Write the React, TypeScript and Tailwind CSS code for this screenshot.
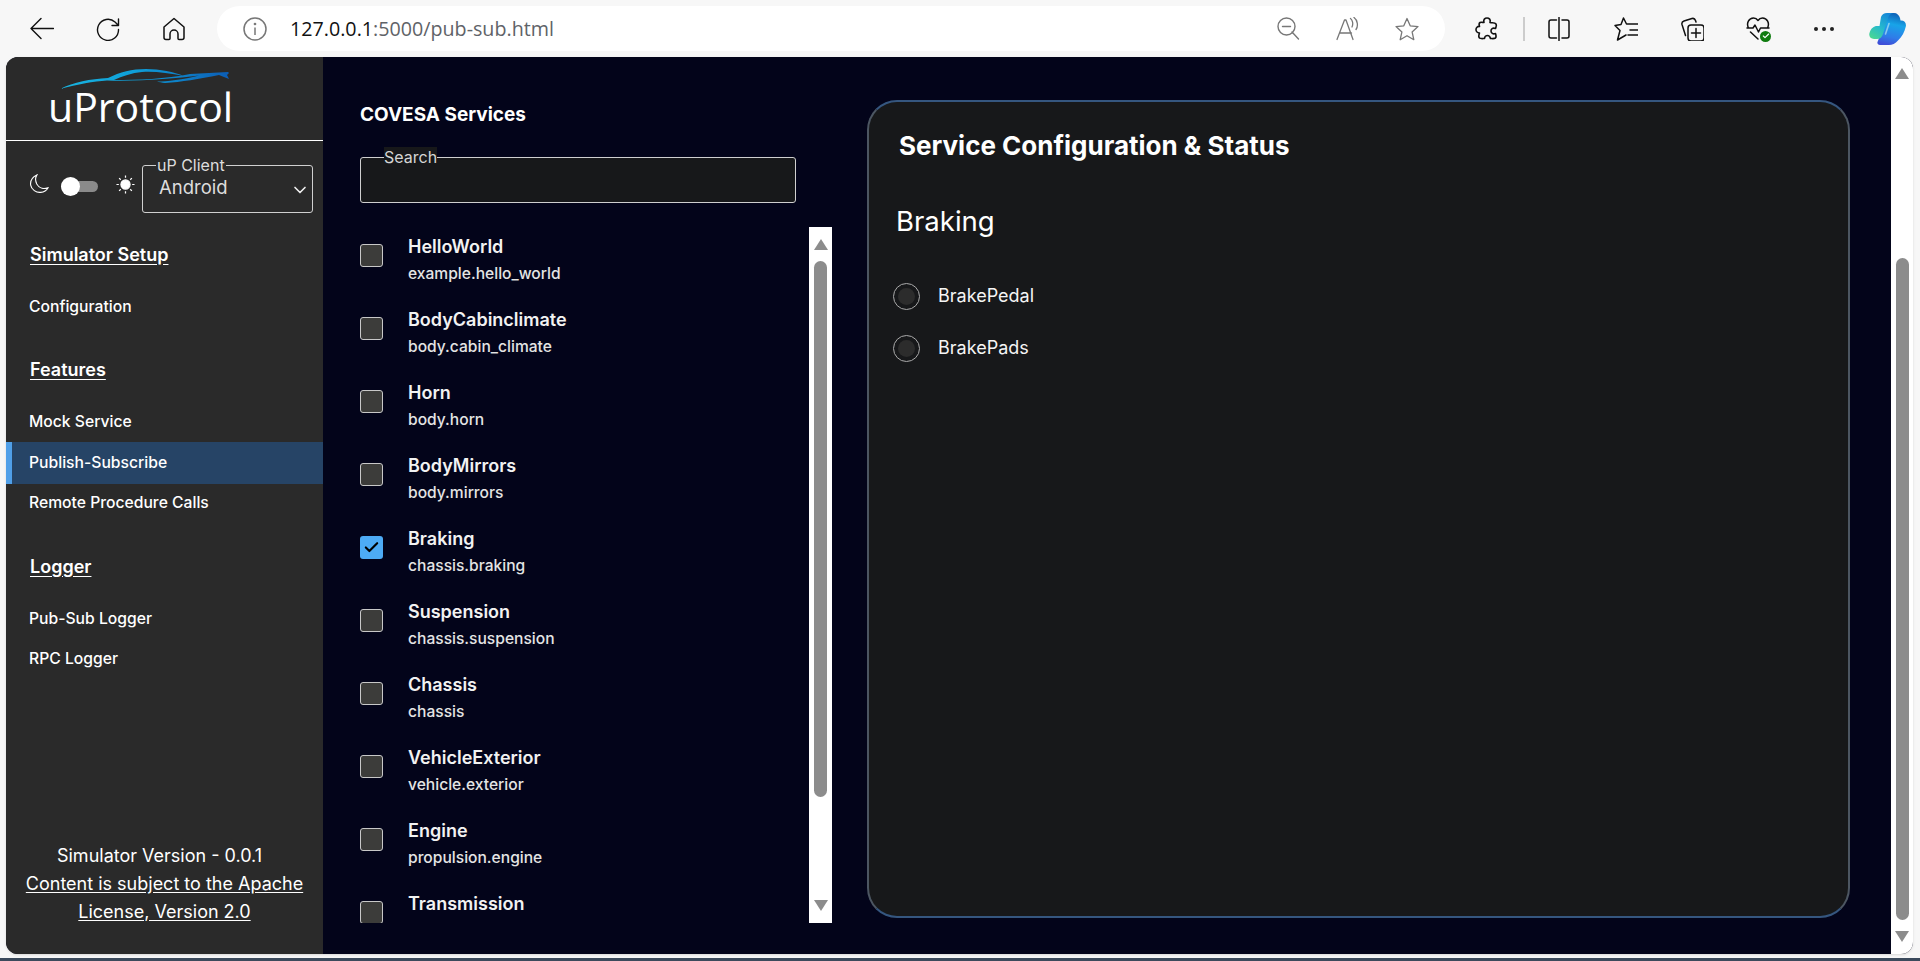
import { ChevronDown, Check } from "lucide-react";

const services = [
  ["HelloWorld", "example.hello_world"],
  ["BodyCabinclimate", "body.cabin_climate"],
  ["Horn", "body.horn"],
  ["BodyMirrors", "body.mirrors"],
  ["Braking", "chassis.braking"],
  ["Suspension", "chassis.suspension"],
  ["Chassis", "chassis"],
  ["VehicleExterior", "vehicle.exterior"],
  ["Engine", "propulsion.engine"],
  ["Transmission", "propulsion.transmission"],
];

function Icon({ d, className, width = 1.5 }: { d: string; className: string; width?: number }) {
  return (
    <svg viewBox="0 0 24 24" className={`h-[24px] w-[24px] shrink-0 ${className}`} fill="none" stroke="currentColor" strokeWidth={width} strokeLinecap="round" strokeLinejoin="round">
      <path d={d} />
    </svg>
  );
}

function CopilotLogo() {
  return (
    <svg viewBox="0 0 37 32" className="ml-[35px] h-[32px] w-[37px] shrink-0">
      <defs>
        <linearGradient id="cpA" x1="0.7" y1="0" x2="0.1" y2="1">
          <stop offset="0" stopColor="#1688d8" />
          <stop offset="0.5" stopColor="#25b8cf" />
          <stop offset="1" stopColor="#4bd98f" />
        </linearGradient>
        <linearGradient id="cpB" x1="0.6" y1="0" x2="0.4" y2="1">
          <stop offset="0" stopColor="#0d5fb5" />
          <stop offset="0.35" stopColor="#18a4e8" />
          <stop offset="0.75" stopColor="#2f7ce8" />
          <stop offset="1" stopColor="#3f4fd8" />
        </linearGradient>
      </defs>
      <path d="M22 0h3c3 0 5 2 6 5l.5 2.500H32c3.500 0 5.500 2.500 4.800 6C35.500 19 33 24 29 27.500 26.500 30.500 23 32 20 32h-9c-2 0-3-1.500-2.500-3L16 10c1.500-5 3-10 6-10z" fill="url(#cpB)" />
      <path d="M12 4c1-2.500 3-4 6-4h7c-3 0-5 2-6 5l-5 16c-1 3-3 5-6 5H5c-3.500 0-5.500-3-4.500-6 1.500-5 4.500-7 7.500-7h2.500z" fill="url(#cpA)" />
      <path d="M20 10.500 16.500 21" stroke="#cdeef5" strokeWidth="1.600" strokeLinecap="round" opacity="0.6" />
    </svg>
  );
}

function Toolbar() {
  return (
    <div className="flex h-[57px] shrink-0 items-center bg-[#f7f7f7] font-['Open_Sans',sans-serif] text-black">
      <Icon className="ml-[30px] text-[#111]" width={1.4} d="M23.500 11.500H1M11 1.500 1 11.500l10 10" />
      <Icon className="ml-[42px] text-[#111]" width={1.4} d="M22.500 12.500A10.500 10.500 0 1 1 19 5l3.500 3.500M22.500 2v6.500H16" />
      <Icon className="ml-[42px] text-[#111]" width={1.5} d="M2 10 12 1.500 22 10v10.500a2 2 0 0 1-2 2h-3a1 1 0 0 1-1-1V17a4 4 0 0 0-8 0v4.500a1 1 0 0 1-1 1H4a2 2 0 0 1-2-2z" />
      <div className="ml-[31px] flex h-[45px] w-[1228px] items-center rounded-full bg-white pl-[26px]">
        <svg viewBox="0 0 24 24" className="h-[24px] w-[24px] text-[#777]" fill="none" stroke="currentColor" strokeWidth="1.5">
          <circle cx="12" cy="12" r="11" />
          <path d="M12 10.500v7.500" />
          <circle cx="12" cy="7" r="0.6" />
        </svg>
        <div className="ml-[23px] text-[19.7px] text-[#5f6368]">
          <span className="text-[#111]">127.0.0.1</span>:5000/pub-sub.html
        </div>
        <div className="ml-auto flex items-center gap-[35px] pr-[26px] text-[#777]">
          <Icon className="" width={1.4} d="M15 15 21.500 22M1 9.500a8.500 8.500 0 1 0 17 0 8.500 8.500 0 0 0-17 0M5.500 9.500h8" />
          <Icon className="" width={1.3} d="M1 22.500 8.500 3h1.500L17 22.500M3.500 16h12M14.500 1.500c2 1.500 3 5.500 1.500 8.500M18 0.500c3.500 2.500 4.500 8.500 2 12" />
          <Icon className="" width={1.3} d="M12 1.500 15.200 8.800 23 9.600 17.100 14.900 18.800 22.700 12 18.700 5.200 22.700 6.900 14.900 1 9.600 8.800 8.800z" />
        </div>
      </div>
      <Icon className="ml-[30px] text-[#111]" width={1.6} d="M9 5.500C8 2.500 10 1 12 1s4 1.500 3 4.500c2.500.5 5 0 6 1.500 1 1.500 0 3-.5 4.500-3-1-4.500.5-4.500 2.500s2 3.500 4.500 2.500c.5 1.500 1 3.500 0 4.500-1.500 1-3.500.5-5 .5-.5-2-1.500-3-3-3s-3 1.500-3 3c-1.500 0-4 .5-5-.5-1.500-1-.5-3.500 0-5C2 16 1 14 1 12.500S2.500 9 4.500 9.500C4 8 3.500 6.500 5 5.500c1-.5 2.500 0 4 0z" />
      <div className="ml-[24px] h-[24px] w-[2px] bg-[#ccc]" />
      <Icon className="ml-[22px] text-[#111]" width={1.5} d="M9.500 3H4a2 2 0 0 0-2 2v14a2 2 0 0 0 2 2h5.500M15 3h5a2 2 0 0 1 2 2v14a2 2 0 0 1-2 2h-5M12 0.500v23" />
      <Icon className="ml-[43px] text-[#111]" width={1.5} d="M15.500 7H12.500L9.500 1 7 7.500 1 8.500l5 5-2.500 9.500 8.500-5M16 7h8M16 13h8M14 18h10" />
      <Icon className="ml-[42px] text-[#111]" width={1.5} d="M11 8h10a3 3 0 0 1 3 3v10a3 3 0 0 1-3 3H11a3 3 0 0 1-3-3V11a3 3 0 0 1 3-3zM16 11.500v9M11.500 16h9M5.500 18.500 2 7.500C1.500 5.500 2.500 4.500 4 4l8-2.500c2-.5 3 .5 3.500 2l.5 1.500" />
      <div className="relative ml-[42px] h-[24px] w-[24px] text-[#111]">
        <Icon className="" width={1.5} d="M2.500 11C0 6 3 1 7.500 1c2 0 3.500 1 4.500 2.500C13 2 14.500 1 16.500 1 21 1 24 6 21.500 11M1 11h6l2-3 3.500 7 2-4h8.500M4.500 15 12 22" />
        <div className="absolute bottom-[-1px] right-[-1px] flex h-[11px] w-[11px] items-center justify-center rounded-full bg-[#107c10]">
          <Check className="h-[8px] w-[8px] text-white" strokeWidth={3.5} />
        </div>
      </div>
      <div className="ml-[44px] flex gap-[4px]">
        <div className="h-[4px] w-[4px] rounded-full bg-[#222]" />
        <div className="h-[4px] w-[4px] rounded-full bg-[#222]" />
        <div className="h-[4px] w-[4px] rounded-full bg-[#222]" />
      </div>
      <CopilotLogo />
    </div>
  );
}

function Logo() {
  return (
    <div className="relative h-[84px] shrink-0 border-b border-white">
      <svg viewBox="0 0 172 22" className="absolute left-[54px] top-[11px] h-[22px] w-[172px]">
        <defs>
          <linearGradient id="car" x1="0" y1="0" x2="1" y2="0">
            <stop offset="0" stopColor="#19b5e0" />
            <stop offset="0.45" stopColor="#0f9fd8" />
            <stop offset="1" stopColor="#0c5db5" />
          </linearGradient>
        </defs>
        <path d="M0 21C14 14 30 11 48 10 60 4 72 1 86 1c14 0 28 3 38 7-16-3-30-5-42-4-10 1-20 4-28 8 24 0 52-1 76-6l38-2 1 1-2 2 2 4-10-4c-20 4-38 7-54 8-3-.2-6-1-8-1.500 10 0 26-2 42-6-24 3-60 6-92 5-14 1-30 4-49 9z" fill="url(#car)" />
      </svg>
      <div className="absolute left-[42px] top-[25px] font-['Open_Sans',sans-serif] text-[41px] leading-[48px] text-white">uProtocol</div>
    </div>
  );
}

function NavHeading({ label, className }: { label: string; className: string }) {
  return <div className={`flex h-10 items-center pl-[24px] text-[18px] font-semibold text-white underline underline-offset-3 ${className}`}>{label}</div>;
}

function NavItem({ label, active, short }: { label: string; active?: boolean; short?: boolean }) {
  if (active) {
    return <div className="flex h-[42px] items-center border-l-[6px] border-[#4f9fe8] bg-[#264466] pl-[17px] text-[15.7px] font-medium text-white">{label}</div>;
  }
  return <div className={`flex items-center pl-[23px] text-[15.7px] font-medium text-white ${short ? "h-[38px]" : "h-10"}`}>{label}</div>;
}

function ThemeSwitch() {
  return (
    <>
      <svg viewBox="0 0 18 18" className="ml-[23px] mt-[-11px] h-[20px] w-[20px] text-white" fill="none" stroke="currentColor" strokeWidth="1">
        <path d="M7 1C3 3 1 6.500 1.500 10c.7 4 5 7 9 6.500 3-.3 5.500-2 6.500-4-4 1.500-8 0-10-3.500C5.500 6 5.500 3.500 7 1z" />
      </svg>
      <div className="relative ml-[12px] mt-[-5px] h-[11px] w-[37px] rounded-full bg-[#8a8a8a]">
        <div className="absolute left-0 top-[-4px] h-[19px] w-[19px] rounded-full bg-white" />
      </div>
      <svg viewBox="0 0 20 20" className="ml-[18px] mt-[-9px] h-[19px] w-[19px] text-white" fill="currentColor" stroke="currentColor" strokeWidth="1.3">
        <circle cx="10" cy="10" r="4.800" />
        <path d="M10 0.500v2.500M10 17v2.500M0.500 10H3M17 10h2.500M3.300 3.300 5 5M15 15l1.700 1.700M3.300 16.700 5 15M15 5l1.700-1.700" />
      </svg>
    </>
  );
}

function Sidebar() {
  return (
    <div className="flex w-[317px] shrink-0 flex-col bg-[#2a2a2a]">
      <Logo />
      <div className="mt-[24px] flex items-center">
        <ThemeSwitch />
        <div className="relative ml-[7px] flex h-[48px] w-[171px] items-center rounded-[3px] border border-[#d0d0d0] pl-[16px] text-[18.5px] text-[#ddd]">
          <span className="absolute left-[13px] top-[-10px] bg-[#2a2a2a] px-[1px] text-[16px] leading-[18px] text-[#ddd]">uP Client</span>
          <span className="mt-[-3px]">Android</span>
          <ChevronDown className="absolute right-[2px] top-[14px] h-[20px] w-[20px] text-[#eee]" strokeWidth={2} />
        </div>
      </div>
      <NavHeading label="Simulator Setup" className="mt-[21px]" />
      <div className="mt-[13px]">
        <NavItem label="Configuration" />
      </div>
      <NavHeading label="Features" className="mt-[22px]" />
      <div className="mt-[13px]">
        <NavItem label="Mock Service" />
        <NavItem label="Publish-Subscribe" active />
        <NavItem label="Remote Procedure Calls" short />
      </div>
      <NavHeading label="Logger" className="mt-[24px]" />
      <div className="mt-[13px]">
        <NavItem label="Pub-Sub Logger" />
        <NavItem label="RPC Logger" />
      </div>
      <div className="mt-auto pb-[28px] text-center text-[18px] leading-[28px] text-white">
        <div className="pr-[10px]">Simulator Version - 0.0.1</div>
        <div className="mx-auto w-[290px] underline underline-offset-2">Content is subject to the Apache License, Version 2.0</div>
      </div>
    </div>
  );
}

function ScrollArrow({ down }: { down?: boolean }) {
  return (
    <svg viewBox="0 0 14 11" className={`h-[11px] w-[14px] ${down ? "rotate-180" : ""}`}>
      <path d="M7 0 14 11H0z" fill="#8c8c8c" />
    </svg>
  );
}

function ServiceRow({ name, path, checked }: { name: string; path: string; checked: boolean }) {
  return (
    <div className="flex h-[73px] shrink-0">
      {checked ? (
        <div className="mt-[17px] flex h-[23px] w-[23px] items-center justify-center rounded-[3px] bg-[#4dabf5]">
          <Check className="h-[17px] w-[17px] text-black" strokeWidth={3} />
        </div>
      ) : (
        <div className="mt-[17px] h-[23px] w-[23px] rounded-[3px] border border-[#c8c8c8] bg-[#3c3c3a]" />
      )}
      <div className="ml-[25px] pt-[10px]">
        <div className="text-[18px] font-semibold leading-[20px] text-[#f2f2f2]">{name}</div>
        <div className="mt-[7px] text-[15.6px] font-medium leading-[20px] text-[#e4e4e4]">{path}</div>
      </div>
    </div>
  );
}

function ServicesColumn() {
  return (
    <div className="ml-[37px] w-[472px] shrink-0">
      <div className="mt-[46px] h-[23px] text-[19px] font-bold leading-[24px] text-white">COVESA Services</div>
      <div className="relative mt-[31px] h-[46px] w-[436px] rounded-[3px] border border-[#cfcfcf] bg-[#17181a]">
        <span className="absolute left-[23px] top-[-11px] bg-[#17181a] text-[16px] leading-[20px] text-[#d5d5d5]">Search</span>
      </div>
      <div className="mt-[24px] flex h-[696px]">
        <div className="w-[449px] overflow-hidden">
          {services.map(([name, path]) => (
            <ServiceRow key={name} name={name} path={path} checked={name === "Braking"} />
          ))}
        </div>
        <div className="flex w-[23px] flex-col items-center bg-white pb-[12px] pt-[12px]">
          <ScrollArrow />
          <div className="mt-[11px] h-[536px] w-[13px] rounded-full bg-[#8c8c8c]" />
          <div className="mt-auto">
            <ScrollArrow down />
          </div>
        </div>
      </div>
    </div>
  );
}

function RadioRow({ label }: { label: string }) {
  return (
    <div className="flex h-[52px] items-center">
      <div className="flex h-[27px] w-[27px] items-center justify-center rounded-full border border-[#aaa]">
        <div className="h-[17px] w-[17px] rounded-full bg-[#2c2c2c]" />
      </div>
      <span className="ml-[18px] mt-[-2px] text-[18px] text-[#f5f5f5]">{label}</span>
    </div>
  );
}

function StatusCard() {
  return (
    <div className="ml-[35px] mt-[43px] h-[818px] w-[983px] shrink-0 rounded-[30px] border-2 border-[#35567f] border-x-[#4c5662] bg-[#17181a] pl-[24px] pt-[27px]">
      <div className="pl-[6px] text-[26px] font-bold leading-[34px] text-white">Service Configuration &amp; Status</div>
      <div className="mt-[40px] pl-[3px] text-[27.5px] leading-[36px] text-white">Braking</div>
      <div className="mt-[31px]">
        <RadioRow label="BrakePedal" />
        <RadioRow label="BrakePads" />
      </div>
    </div>
  );
}

export default function App() {
  return (
    <div className="flex h-screen w-full flex-col overflow-hidden bg-[#f7f7f7] font-['Inter',sans-serif]">
      <Toolbar />
      <div className="ml-[6px] flex h-[897px] w-[1907px] shrink-0 overflow-hidden rounded-[12px] bg-[#03041a] shadow-sm">
        <Sidebar />
        <ServicesColumn />
        <StatusCard />
        <div className="ml-auto flex w-[22px] flex-col items-center bg-white pb-[12px] pt-[11px]">
          <ScrollArrow />
          <div className="mt-[179px] h-[662px] w-[13px] rounded-full bg-[#8c8c8c]" />
          <div className="mt-auto">
            <ScrollArrow down />
          </div>
        </div>
      </div>
      <div className="mt-[4px] h-[3px] bg-[#3b4a5c]" />
    </div>
  );
}
